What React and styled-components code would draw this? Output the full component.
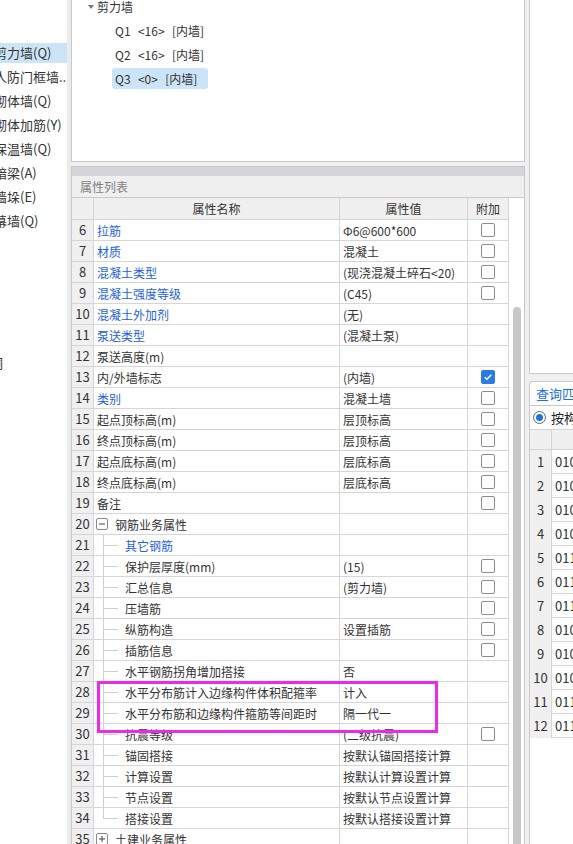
import React from 'react';
import styled, { createGlobalStyle, css } from 'styled-components';

const GlobalStyle = createGlobalStyle`
  html, body { margin: 0; padding: 0; background: #f0f0f0; }
  body {
    font-family: "Noto Sans CJK SC", "Noto Sans", sans-serif;
    font-size: 12px;
    color: #333;
    overflow: hidden;
  }
  * { box-sizing: border-box; }
`;

const Screen = styled.div`
  display: flex;
  width: 573px;
  height: 844px;
  overflow: hidden;
  background: #f0f0f0;
`;

/* ---------- left sidebar ---------- */
const Sidebar = styled.nav`
  width: 67px;
  flex: none;
  background: #fff;
  overflow: hidden;
  display: flex;
  flex-direction: column;
  gap: 4px;
  padding-top: 43px;
`;

const SideItem = styled.div`
  height: 20px;
  line-height: 20px;
  font-size: 13px;
  white-space: nowrap;
  overflow: hidden;
  text-indent: ${p => p.$indent ?? -6}px;
  margin-top: ${p => p.$offset || 0}px;
  color: #333;
  background: ${p => (p.$active ? '#cce4f7' : 'transparent')};
`;

const Splitter = styled.div`
  width: 4px;
  flex: none;
  background: #ebebeb;
`;

/* ---------- center column ---------- */
const CenterCol = styled.div`
  width: 454px;
  flex: none;
  display: flex;
  flex-direction: column;
  gap: 4px;
`;

const TreePanel = styled.div`
  height: 162px;
  flex: none;
  background: #fff;
  border: 1px solid #c9c9c9;
  border-top: none;
  overflow: hidden;
`;

const TreeList = styled.div`
  display: flex;
  flex-direction: column;
  margin-top: -6px;
`;

const TreeRow = styled.div`
  height: 24px;
  display: flex;
  align-items: center;
  padding-left: ${p => (p.$level === 0 ? 16 : 40)}px;
`;

const Caret = styled.span`
  width: 0;
  height: 0;
  border-left: 3.5px solid transparent;
  border-right: 3.5px solid transparent;
  border-top: 4px solid #7a7a7a;
  margin-right: 3px;
  margin-top: 1px;
`;

const TreeLabel = styled.span`
  height: 21px;
  line-height: 21px;
  padding: 0 11px 0 3px;
  margin-left: ${p => (p.$level === 0 ? -3 : 0)}px;
  border-radius: 3px;
  white-space: pre;
  word-spacing: 1px;
  color: #333;
  background: ${p => (p.$selected ? '#cce4f7' : 'transparent')};
`;

const PropPanel = styled.section`
  flex: 1;
  min-height: 0;
  display: flex;
  flex-direction: column;
  background: #fff;
  border-left: 1px solid #c9c9c9;
  border-right: 1px solid #c9c9c9;
`;

const GripBar = styled.div`
  height: 10px;
  flex: none;
  background: #d4d6da;
  border-top: 1px solid #c4c6ca;
`;

const PanelTitle = styled.div`
  height: 22px;
  flex: none;
  line-height: 21px;
  padding-left: 8px;
  background: #efefef;
  border-bottom: 1px solid #c9c9c9;
  color: #7f7f7f;
  font-size: 12px;
`;

const TableWrap = styled.div`
  flex: 1;
  min-height: 0;
  display: flex;
`;

const Table = styled.div`
  width: 437px;
  flex: none;
  display: flex;
  flex-direction: column;
`;

const TableBody = styled.div`
  position: relative;
  display: flex;
  flex-direction: column;
`;

const cols = '22px 246px 128px 41px';

const HeadRow = styled.div`
  display: grid;
  grid-template-columns: ${cols};
  height: 22px;
  flex: none;
  border-bottom: 1px solid #d4d4d4;
  background: #f0f0f0;
`;

const HeadCell = styled.div`
  border-right: 1px solid #d4d4d4;
  line-height: 21px;
  text-align: center;
  color: #333;
`;

const Row = styled.div`
  display: grid;
  grid-template-columns: ${cols};
  height: 21px;
  flex: none;
  border-bottom: 1px solid #d6d6d6;
`;

const NumCell = styled.div`
  background: #f0f0f0;
  border-right: 1px solid #d6d6d6;
  text-align: center;
  font-size: 13px;
  line-height: 20px;
  color: #333;
`;

const NameCell = styled.div`
  display: flex;
  align-items: center;
  border-right: 1px solid #d6d6d6;
  padding-left: ${p => (p.$kind === 'group' ? 2 : p.$kind === 'child' || p.$kind === 'last' ? 0 : 3)}px;
  white-space: nowrap;
  overflow: hidden;
  color: ${p => (p.$blue ? '#1f5fe0' : '#333')};
`;

const ValueCell = styled.div`
  display: flex;
  align-items: center;
  border-right: 1px solid #d6d6d6;
  padding-left: 3px;
  white-space: nowrap;
  overflow: hidden;
  color: #333;
`;

const AddCell = styled.div`
  display: flex;
  align-items: center;
  justify-content: center;
  border-right: 1px solid #d6d6d6;
`;

const Guide = styled.span`
  position: relative;
  width: 31px;
  height: 100%;
  flex: none;
  &::before {
    content: '';
    position: absolute;
    left: 9px;
    top: 0;
    width: 1px;
    height: ${p => (p.$last ? '50%' : '100%')};
    background: #cfcfcf;
  }
  &::after {
    content: '';
    position: absolute;
    left: 9px;
    top: 50%;
    width: 15px;
    height: 1px;
    background: #cfcfcf;
  }
`;

const ExpandBox = styled.span`
  width: 12px;
  height: 12px;
  flex: none;
  margin-right: 7px;
  border: 1px solid #8a8a8a;
  border-radius: 2px;
  display: inline-flex;
  align-items: center;
  justify-content: center;
`;

const CheckBox = styled.span`
  width: 14px;
  height: 14px;
  border-radius: 2px;
  display: inline-flex;
  align-items: center;
  justify-content: center;
  ${p =>
    p.$on
      ? css`
          background: #2a7be4;
          border: 1px solid #2a7be4;
        `
      : css`
          background: #fff;
          border: 1px solid #8c8c8c;
        `}
`;

const ScrollTrack = styled.div`
  width: 15px;
  flex: none;
  padding-left: 4px;
  padding-top: 109px;
  background: #fff;
`;

const ScrollThumb = styled.div`
  width: 8px;
  height: 100%;
  background: #c8c8c8;
  border-radius: 4px 4px 0 0;
`;

const Annotation = styled.div`
  position: absolute;
  left: 25px;
  top: 461px;
  width: 341px;
  height: 52px;
  border: 3px solid #ec2aec;
  pointer-events: none;
`;

/* ---------- right column ---------- */
const RightCol = styled.div`
  flex: 1;
  min-width: 0;
  display: flex;
  flex-direction: column;
  padding-left: 4px;
  gap: 7px;
`;

const TopPanel = styled.div`
  height: 374px;
  flex: none;
  background: #fff;
  border-left: 1px solid #c9c9c9;
  border-bottom: 1px solid #c9c9c9;
`;

const QueryPanel = styled.div`
  flex: 1;
  display: flex;
  flex-direction: column;
  min-height: 0;
`;

const Tab = styled.div`
  height: 24px;
  flex: none;
  background: #fff;
  border: 1px solid #c9c9c9;
  border-bottom: none;
  border-right: none;
  border-radius: 4px 0 0 0;
  padding-left: 6px;
  line-height: 23px;
  color: #1f6fe0;
  font-size: 13px;
  white-space: nowrap;
  overflow: hidden;
`;

const QueryBody = styled.div`
  flex: 1;
  background: #fff;
  border-left: 1px solid #c9c9c9;
  border-top: 1px solid #c9c9c9;
  display: flex;
  flex-direction: column;
`;

const RadioRow = styled.div`
  height: 23px;
  flex: none;
  display: flex;
  align-items: center;
  padding-left: 3px;
  gap: 5px;
  white-space: nowrap;
  font-size: 13px;
  color: #222;
`;

const Radio = styled.span`
  width: 13px;
  height: 13px;
  flex: none;
  border: 1px solid #666;
  border-radius: 50%;
  background: #fff;
  display: inline-flex;
  align-items: center;
  justify-content: center;
  &::after {
    content: '';
    width: 7px;
    height: 7px;
    border-radius: 50%;
    background: #1a73e8;
  }
`;

const qCols = '22px 1fr';

const QHead = styled.div`
  display: grid;
  grid-template-columns: ${qCols};
  height: 21px;
  flex: none;
  background: #f0f0f0;
  border-top: 1px solid #d4d4d4;
  border-bottom: 1px solid #d4d4d4;
`;

const QHeadCell = styled.div`
  border-right: 1px solid #d4d4d4;
`;

const QRow = styled.div`
  display: grid;
  grid-template-columns: ${qCols};
  height: 24px;
  flex: none;
  border-bottom: 1px solid #d6d6d6;
`;

const QNum = styled.div`
  background: #f0f0f0;
  border-right: 1px solid #d6d6d6;
  text-align: center;
  line-height: 24px;
  font-size: 13px;
  color: #333;
`;

const QVal = styled.div`
  padding-left: 3px;
  line-height: 24px;
  font-size: 13px;
  color: #333;
  white-space: nowrap;
  overflow: hidden;
`;

/* ---------- data ---------- */
const sideItems = [
  { label: '剪力墙(Q)', active: true },
  { label: '人防门框墙...' },
  { label: '砌体墙(Q)' },
  { label: '砌体加筋(Y)' },
  { label: '保温墙(Q)' },
  { label: '暗梁(A)' },
  { label: '墙垛(E)' },
  { label: '幕墙(Q)' },
];

const walls = [
  { label: 'Q1  <16>  [内墙]' },
  { label: 'Q2  <16>  [内墙]' },
  { label: 'Q3  <0>  [内墙]', selected: true },
];

const rows = [
  { n: 6, name: '拉筋', blue: true, value: 'Φ6@600*600', cb: 'off' },
  { n: 7, name: '材质', blue: true, value: '混凝土', cb: 'off' },
  { n: 8, name: '混凝土类型', blue: true, value: '(现浇混凝土碎石<20)', cb: 'off' },
  { n: 9, name: '混凝土强度等级', blue: true, value: '(C45)', cb: 'off' },
  { n: 10, name: '混凝土外加剂', blue: true, value: '(无)' },
  { n: 11, name: '泵送类型', blue: true, value: '(混凝土泵)' },
  { n: 12, name: '泵送高度(m)', value: '' },
  { n: 13, name: '内/外墙标志', value: '(内墙)', cb: 'on' },
  { n: 14, name: '类别', blue: true, value: '混凝土墙', cb: 'off' },
  { n: 15, name: '起点顶标高(m)', value: '层顶标高', cb: 'off' },
  { n: 16, name: '终点顶标高(m)', value: '层顶标高', cb: 'off' },
  { n: 17, name: '起点底标高(m)', value: '层底标高', cb: 'off' },
  { n: 18, name: '终点底标高(m)', value: '层底标高', cb: 'off' },
  { n: 19, name: '备注', value: '', cb: 'off' },
  { n: 20, name: '钢筋业务属性', kind: 'group', open: true, value: '' },
  { n: 21, name: '其它钢筋', kind: 'child', blue: true, value: '' },
  { n: 22, name: '保护层厚度(mm)', kind: 'child', value: '(15)', cb: 'off' },
  { n: 23, name: '汇总信息', kind: 'child', value: '(剪力墙)', cb: 'off' },
  { n: 24, name: '压墙筋', kind: 'child', value: '', cb: 'off' },
  { n: 25, name: '纵筋构造', kind: 'child', value: '设置插筋', cb: 'off' },
  { n: 26, name: '插筋信息', kind: 'child', value: '', cb: 'off' },
  { n: 27, name: '水平钢筋拐角增加搭接', kind: 'child', value: '否' },
  { n: 28, name: '水平分布筋计入边缘构件体积配箍率', kind: 'child', value: '计入' },
  { n: 29, name: '水平分布筋和边缘构件箍筋等间距时', kind: 'child', value: '隔一代一' },
  { n: 30, name: '抗震等级', kind: 'child', value: '(二级抗震)', cb: 'off' },
  { n: 31, name: '锚固搭接', kind: 'child', value: '按默认锚固搭接计算' },
  { n: 32, name: '计算设置', kind: 'child', value: '按默认计算设置计算' },
  { n: 33, name: '节点设置', kind: 'child', value: '按默认节点设置计算' },
  { n: 34, name: '搭接设置', kind: 'last', value: '按默认搭接设置计算' },
  { n: 35, name: '土建业务属性', kind: 'group', open: false, value: '' },
];

const codes = ['010', '010', '010', '010', '011', '011', '011', '010', '010', '010', '011', '011'];

/* ---------- small drawings ---------- */
const Tick = () => (
  <svg width="10" height="10" viewBox="0 0 10 10" aria-hidden="true">
    <path d="M1.8 5.2 L4 7.3 L8.3 2.8" fill="none" stroke="#fff" strokeWidth="1.5" />
  </svg>
);

const PlusMinus = ({ open }) => (
  <svg width="8" height="8" viewBox="0 0 8 8" aria-hidden="true">
    <path d="M1 4 H7" stroke="#444" strokeWidth="1" />
    {!open && <path d="M4 1 V7" stroke="#444" strokeWidth="1" />}
  </svg>
);

function NameContent({ row }) {
  if (row.kind === 'group') {
    return (
      <>
        <ExpandBox>
          <PlusMinus open={row.open} />
        </ExpandBox>
        {row.name}
      </>
    );
  }
  if (row.kind === 'child' || row.kind === 'last') {
    return (
      <>
        <Guide $last={row.kind === 'last'} />
        {row.name}
      </>
    );
  }
  return row.name;
}

export default function App() {
  return (
    <>
      <GlobalStyle />
      <Screen>
        <Sidebar>
          {sideItems.map(it => (
            <SideItem key={it.label} $active={it.active}>
              {it.label}
            </SideItem>
          ))}
          <SideItem $offset={118} $indent={-10}>
            洞
          </SideItem>
        </Sidebar>
        <Splitter />

        <CenterCol>
          <TreePanel>
            <TreeList>
              <TreeRow $level={0}>
                <Caret />
                <TreeLabel $level={0}>剪力墙</TreeLabel>
              </TreeRow>
              {walls.map(w => (
                <TreeRow key={w.label} $level={1}>
                  <TreeLabel $selected={w.selected}>{w.label}</TreeLabel>
                </TreeRow>
              ))}
            </TreeList>
          </TreePanel>

          <PropPanel>
            <GripBar />
            <PanelTitle>属性列表</PanelTitle>
            <TableWrap>
              <Table>
                <HeadRow>
                  <HeadCell />
                  <HeadCell>属性名称</HeadCell>
                  <HeadCell>属性值</HeadCell>
                  <HeadCell>附加</HeadCell>
                </HeadRow>
                <TableBody>
                  {rows.map(r => (
                    <Row key={r.n}>
                      <NumCell>{r.n}</NumCell>
                      <NameCell $kind={r.kind} $blue={r.blue}>
                        <NameContent row={r} />
                      </NameCell>
                      <ValueCell>{r.value}</ValueCell>
                      <AddCell>
                        {r.cb && <CheckBox $on={r.cb === 'on'}>{r.cb === 'on' && <Tick />}</CheckBox>}
                      </AddCell>
                    </Row>
                  ))}
                  <Annotation />
                </TableBody>
              </Table>
              <ScrollTrack>
                <ScrollThumb />
              </ScrollTrack>
            </TableWrap>
          </PropPanel>
        </CenterCol>

        <RightCol>
          <TopPanel />
          <QueryPanel>
            <Tab>查询匹配清单</Tab>
            <QueryBody>
              <RadioRow>
                <Radio />
                按构件类型
              </RadioRow>
              <QHead>
                <QHeadCell />
                <div />
              </QHead>
              {codes.map((c, i) => (
                <QRow key={i}>
                  <QNum>{i + 1}</QNum>
                  <QVal>{c}101001</QVal>
                </QRow>
              ))}
            </QueryBody>
          </QueryPanel>
        </RightCol>
      </Screen>
    </>
  );
}
